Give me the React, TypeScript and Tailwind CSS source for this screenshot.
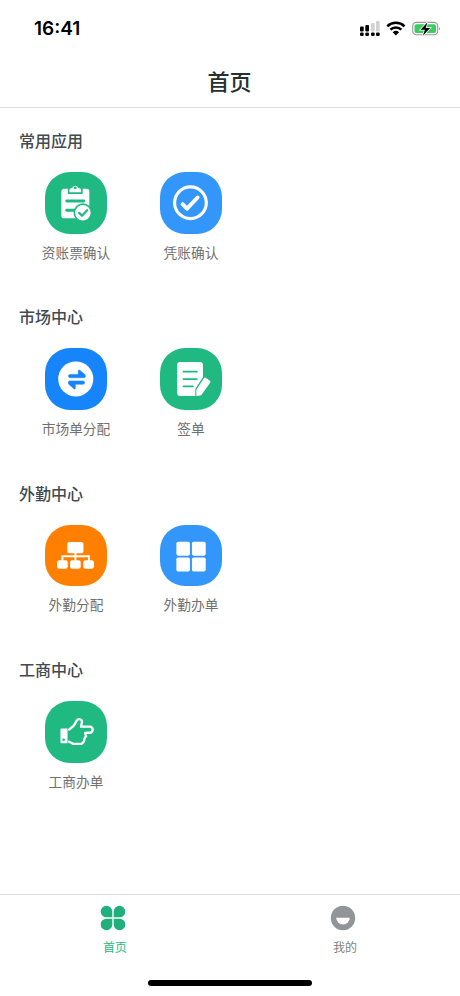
import type { ReactNode } from 'react'

const GREEN = '#1fb981'

function ClipboardIcon() {
    return (
        <svg viewBox="0 0 62 62" className="w-full h-full" fill="none" stroke={GREEN} strokeLinecap="round">
            <path d="M18.7 17H23v5.2h15V17h4a2.7 2.7 0 0 1 2.7 2.7V44a2.7 2.7 0 0 1-2.7 2.7H19.2a2.7 2.7 0 0 1-2.7-2.7V19.700A2.7 2.7 0 0 1 18.700 17z" fill="#fff" stroke="none" />
            <path d="M24.6 20.5v-2.300q0-1.800 1.800-1.800h.8a3.400 3.400 0 0 1 6.600 0h.8q1.800 0 1.800 1.800v2.300z" fill="#fff" stroke="none" />
            <circle cx="30.5" cy="16" r="1.4" fill={GREEN} stroke="none" />
            <path d="M21.9 29.3h17.2M21.9 38.600h7.500" strokeWidth="3" />
            <circle cx="38.2" cy="41" r="8.6" fill="#fff" strokeWidth="1.6" />
            <path d="M34.4 41.2l2.9 2.9 5.2-5.6" strokeWidth="2.2" />
        </svg>
    )
}

function CheckIcon() {
    return (
        <svg viewBox="0 0 62 62" className="w-full h-full" fill="none" stroke="#fff" strokeLinecap="round" strokeLinejoin="round">
            <circle cx="30.7" cy="31" r="16" strokeWidth="3.2" />
            <path d="M22.8 32.4l4.4 4.6L37.9 25.7" strokeWidth="4" />
        </svg>
    )
}

function SwapIcon() {
    return (
        <svg viewBox="0 0 62 62" className="w-full h-full">
            <circle cx="31" cy="31.2" r="17.7" fill="#fff" />
            <path d="M25.3 30a1.7 1.7 0 0 1 0-3.4h8.200v-3.500q0-1.700 1.500-.6l5.300 4.200q1.200 3.300-.9 3.300zM38.3 33.2a1.7 1.7 0 0 1 0 3.400h-7.700v3.900q0 1.700-1.500.6l-5.200-4.600q-1.200-3.300.9-3.300z" fill="#1685fc" stroke="#1685fc" strokeWidth=".5" />
        </svg>
    )
}

function SignIcon() {
    return (
        <svg viewBox="0 0 62 62" className="w-full h-full">
            <path d="M20.3 14h20a3 3 0 0 1 3 3v12.300l-7.700 12v7H20.300a3 3 0 0 1-3-3V17a3 3 0 0 1 3-3z" fill="#fff" />
            <path d="M23.6 23.9h13.6M23.6 31.3h13.600M23.6 38.700h9.600" stroke={GREEN} strokeWidth="1.7" strokeLinecap="round" />
            <path d="M44.200 30.400q.8-1 1.900-.3l4.200 2.900q1.100.8.4 1.900l-8.600 12q-.5.7-1.400.9l-4 .6-.2-5q0-.8.400-1.500z" fill="#fff" />
        </svg>
    )
}

function OrgIcon() {
    return (
        <svg viewBox="0 0 62 62" className="w-full h-full" fill="#fff">
            <rect x="22.5" y="17.2" width="16.3" height="11.2" rx="2" />
            <path d="M30.7 27v9M17.5 36v-4.500h26.800V36" fill="none" stroke="#fff" strokeWidth="2" />
            <rect x="12.2" y="35.500" width="10.7" height="8.6" rx="2.2" />
            <rect x="25.3" y="35.500" width="10.7" height="8.6" rx="2.2" />
            <rect x="38.6" y="35.500" width="10.7" height="8.6" rx="2.2" />
        </svg>
    )
}

function GridIcon() {
    return (
        <svg viewBox="0 0 62 62" className="w-full h-full" fill="#fff">
            <rect x="16.5" y="16.9" width="13.7" height="14" rx="1.8" />
            <rect x="32.2" y="16.9" width="13.9" height="14" rx="1.8" />
            <rect x="16.5" y="32.8" width="13.7" height="14" rx="1.8" />
            <rect x="32.2" y="32.8" width="13.9" height="14" rx="1.8" />
        </svg>
    )
}

function HandIcon() {
    return (
        <svg viewBox="0 0 62 62" className="w-full h-full" fill="none" stroke="#fff" strokeWidth="2.3" strokeLinejoin="round" strokeLinecap="round">
            <path d="M24.300 28.800l5-4.300 2.800-5c1.300-2.100 5.300-1.300 5.200 1.500l-1 4.900h8.600c4.400 0 4.100 6.100 0 6.100l-4.400.1.900 3.400-1.700 2.500-.3 2.700-2.600 2.600h-8.100l-4.400-2.300" />
            <path d="M16.5 27.8h6.200v14.800h-6.200q-.9 0-.9-.9v-13q0-.9.9-.9z" fill="#fff" stroke="none" />
            <circle cx="18.8" cy="39" r="1.3" fill={GREEN} stroke="none" />
        </svg>
    )
}

function AppTile({ label, color, children }: { label: string, color: string, children: ReactNode }) {
    return (
        <div className="flex flex-col items-center w-[115px]">
            <div className={`w-[61.5px] h-[61.5px] rounded-[25px] ${color}`}>{children}</div>
            <span className="mt-2 text-[13.7px] leading-5 text-[#707070]">{label}</span>
        </div>
    )
}

function Section({ title, children }: { title: string, children: ReactNode }) {
    return (
        <section className="h-[176.4px] pt-5">
            <h2 className="pl-[19px] text-base leading-6 font-medium text-[#414a50]">{title}</h2>
            <div className="flex pl-[18.5px] pt-5">{children}</div>
        </section>
    )
}

function StatusBar() {
    return (
        <div className="flex items-center justify-between h-[54px] pl-[34px] pr-[18px] pt-[3px]">
            <span className="text-[19px] leading-6 font-semibold text-black font-[Inter]">16:41</span>
            <svg width="84" height="20" viewBox="0 0 84 20" className="mr-px">
                <g fill="#000">
                    <rect x="3" y="7.5" width="3.7" height="5" rx="1" />
                    <rect x="8.3" y="6" width="3.7" height="6.5" rx="1" />
                    <rect x="14" y="4" width="3.7" height="8.5" rx="1" fill="#d2d2d2" />
                    <rect x="19" y="2" width="3.7" height="10.5" rx="1" fill="#d2d2d2" />
                    <rect x="3" y="13.500" width="3.7" height="3.5" rx="1.2" />
                    <rect x="8.3" y="13.500" width="3.7" height="3.5" rx="1.2" />
                    <rect x="14" y="13.500" width="3.7" height="3.5" rx="1.2" />
                    <rect x="19" y="13.500" width="3.7" height="3.5" rx="1.2" />
                </g>
                <g fill="none" stroke="#000" strokeWidth="2.5">
                    <path d="M30.300 7.300a12.500 12.500 0 0 1 17.200 0" />
                    <path d="M33.400 10.700a8 8 0 0 1 11 0" />
                </g>
                <path d="M35.700 13.200a4.800 4.800 0 0 1 6.400 0l-3.200 3.200z" />
                <rect x="55.7" y="3.4" width="25" height="12.4" rx="3.7" fill="#fff" stroke="#999" strokeWidth="1.1" />
                <rect x="57.5" y="5.2" width="21.5" height="8.8" rx="2" fill="#3ccb60" />
                <path d="M82 7.600q1.800 2 0 4z" fill="#999" />
                <path d="M70.500 3.200l-7 7.500h4.400l-2 6 7.300-7.800h-4.500z" stroke="#fff" strokeWidth="1.5" paintOrder="stroke" />
            </svg>
        </div>
    )
}

export default function App() {
    return (
        <div className="flex flex-col w-[460px] h-[996px] overflow-hidden bg-white font-['Noto_Sans_CJK_SC',sans-serif]">
            <StatusBar />
            <header className="flex items-center justify-center h-[54px] shrink-0 border-b border-[#dedede] pb-0.5 pr-px">
                <h1 className="text-[22px] leading-8 font-medium text-[#26302f]">首页</h1>
            </header>
            <main className="flex-1 min-h-0">
                <Section title="常用应用">
                    <AppTile label="资账票确认" color="bg-[#1fb981]"><ClipboardIcon /></AppTile>
                    <AppTile label="凭账确认" color="bg-[#3296fa]"><CheckIcon /></AppTile>
                </Section>
                <Section title="市场中心">
                    <AppTile label="市场单分配" color="bg-[#1685fc]"><SwapIcon /></AppTile>
                    <AppTile label="签单" color="bg-[#1fb981]"><SignIcon /></AppTile>
                </Section>
                <Section title="外勤中心">
                    <AppTile label="外勤分配" color="bg-[#ff7f00]"><OrgIcon /></AppTile>
                    <AppTile label="外勤办单" color="bg-[#3296fa]"><GridIcon /></AppTile>
                </Section>
                <Section title="工商中心">
                    <AppTile label="工商办单" color="bg-[#1fb981]"><HandIcon /></AppTile>
                </Section>
            </main>
            <nav className="flex h-[102px] shrink-0 border-t border-[#dedede] text-xs leading-4">
                <div className="flex flex-1 flex-col items-center pt-[9.5px] text-[#1fb981]">
                    <svg width="26" height="26" viewBox="0 0 26 26" fill="#1fb07c" className="mr-1">
                        <path d="M12.300 12.300H6.600a5.800 5.800 0 1 1 5.700-5.800zM13.700 12.300h5.700a5.800 5.800 0 1 0-5.700-5.800zM12.300 13.700H6.600a5.800 5.800 0 1 0 5.700 5.800zM13.700 13.700h5.700a5.800 5.800 0 1 1-5.700 5.800z" />
                    </svg>
                    <span className="mt-[8.5px]">首页</span>
                </div>
                <div className="flex flex-1 flex-col items-center pt-[9.5px] text-[#7d7f82]">
                    <svg width="26" height="26" viewBox="0 0 26 26" className="mr-1">
                        <circle cx="13" cy="13" r="12.2" fill="#929598" />
                        <path d="M6.200 12.700h13.600a6.800 6.800 0 0 1-13.600 0z" fill="#fff" />
                    </svg>
                    <span className="mt-[8.5px]">我的</span>
                </div>
            </nav>
            <div className="z-10 mx-auto -mt-4 mb-[10px] h-1.5 w-[164px] shrink-0 rounded-full bg-black" />
        </div>
    )
}
